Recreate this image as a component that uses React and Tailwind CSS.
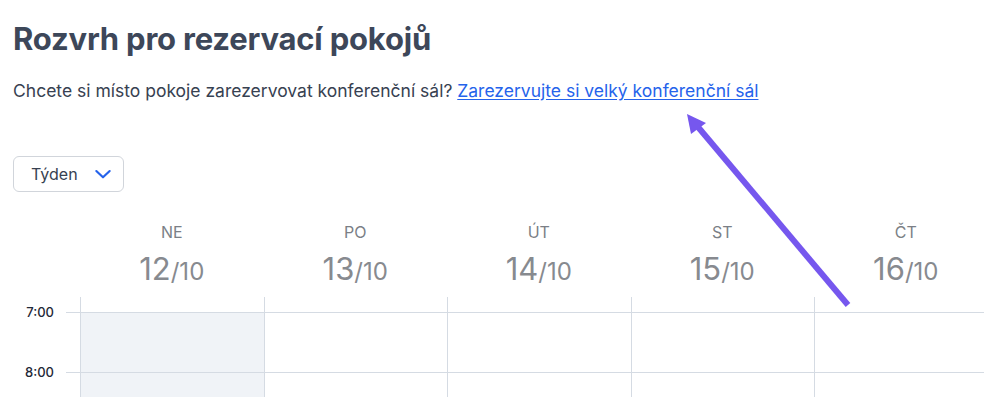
import React from 'react';

const days = [
  { name: 'NE', day: '12', shaded: true },
  { name: 'PO', day: '13' },
  { name: 'ÚT', day: '14' },
  { name: 'ST', day: '15' },
  { name: 'ČT', day: '16' },
];

const hours = ['7:00', '8:00'];

export default function App() {
  return (
    <div className="relative w-[984px] h-[397px] overflow-hidden bg-white font-['Inter',sans-serif]">
      <div className="px-[13px] pt-[20px]">
        <h1 className="text-[31px] leading-[37px] font-bold text-[#3d4759] tracking-[-0.2px]">
          Rozvrh pro rezervací pokojů
        </h1>
        <p className="mt-[22px] text-[17.5px] leading-[24px] text-[#374151]">
          Chcete si místo pokoje zarezervovat konferenční sál?{' '}
          <a href="#" className="text-[#2563eb] underline underline-offset-2">
            Zarezervujte si velký konferenční sál
          </a>
        </p>
        <button className="mt-[53px] flex items-center gap-[15px] h-[36px] w-[111px] pl-[17px] border border-[#d1d5db] rounded-md text-[16px] text-[#374151]">
          Týden
          <svg width="20" height="20" viewBox="0 0 24 24" fill="none" stroke="#2563eb" strokeWidth="2.6" strokeLinecap="round" strokeLinejoin="round">
            <path d="M4 8.5l8 7.5 8-7.5" />
          </svg>
        </button>
      </div>

      {/* day headers */}
      <div className="flex mt-[30px]">
        <div className="w-[80px] shrink-0" />
        {days.map((d) => (
          <div key={d.day} className="w-[183.5px] shrink-0 flex flex-col items-center">
            <span className="text-[16px] leading-[20px] text-[#7b7f86]">{d.name}</span>
            <span className="mt-[11px] leading-[32px] text-[#878a8f]">
              <span className="text-[31px]">{d.day}</span>
              <span className="text-[24px]">/10</span>
            </span>
          </div>
        ))}
      </div>

      {/* grid */}
      <div className="flex mt-[7px]">
        <div className="w-[80px] shrink-0 pt-[15px]">
          {hours.map((h) => (
            <div key={h} className="h-[60px] flex items-start">
              <span className="w-[54px] text-right text-[13px] leading-[16px] font-medium text-[#1f2937] -mt-[8px]">{h}</span>
              <div className="flex-1 ml-[12px] border-t border-[#d5dbe3]" />
            </div>
          ))}
        </div>
        {days.map((d) => (
          <div key={d.day} className="w-[183.5px] shrink-0 border-l border-[#d5dbe3] pt-[15px]">
            {hours.map((h) => (
              <div key={h} className={`h-[60px] border-t border-[#d5dbe3] ${d.shaded ? 'bg-[#f0f3f7]' : ''}`} />
            ))}
          </div>
        ))}
      </div>

      {/* annotation arrow */}
      <svg className="absolute inset-0 pointer-events-none" width="984" height="397">
        <line x1="848" y1="305" x2="698" y2="127" stroke="#7657ee" strokeWidth="6" />
        <polygon points="687,114 706,123 691,134" fill="#7657ee" />
      </svg>
    </div>
  );
}
